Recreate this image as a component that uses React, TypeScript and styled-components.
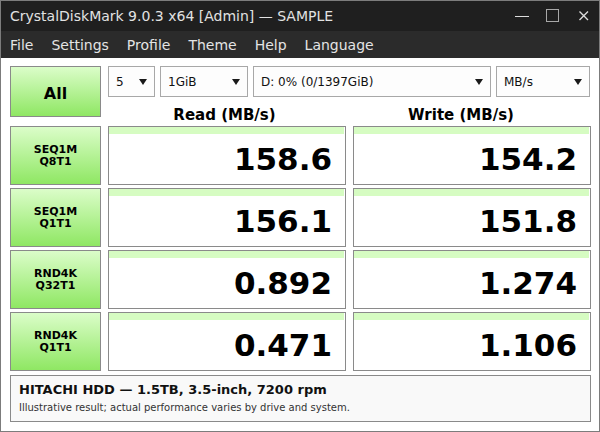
import React from "react";
import styled, { createGlobalStyle } from "styled-components";

const Global = createGlobalStyle`
  html, body { margin: 0; padding: 0; background: #ffffff; }
  * { box-sizing: border-box; }
`;

const FONT = `"DejaVu Sans", Verdana, sans-serif`;

const Window = styled.div`
  width: 600px;
  height: 432px;
  border: 1px solid #7c7c7c;
  background: #ffffff;
  font-family: ${FONT};
  display: flex;
  flex-direction: column;
  overflow: hidden;
`;

const TitleBar = styled.div`
  height: 30px;
  background: #1f1f1f;
  color: #e2e2e2;
  display: flex;
  align-items: center;
  padding-left: 9px;
  font-size: 14px;
`;

const TitleText = styled.div`
  flex: 1;
  white-space: nowrap;
`;

const WinButtons = styled.div`
  display: flex;
  align-items: center;
  height: 100%;
`;

const WinButton = styled.div<{ $w: number }>`
  width: ${(p) => p.$w}px;
  height: 100%;
  display: flex;
  align-items: center;
  justify-content: center;
`;

const MenuBar = styled.div`
  height: 27px;
  background: #2b2b2b;
  color: #e4e4e4;
  display: flex;
  align-items: center;
  font-size: 14px;
`;

const MenuItem = styled.div`
  padding: 0 9px;
  white-space: nowrap;
`;

const Content = styled.div`
  flex: 1;
  padding: 8px 8px 0 9px;
  display: flex;
  flex-direction: column;
`;

const Top = styled.div`
  display: grid;
  grid-template-columns: 91px 238px 238px;
  grid-template-rows: 31px 29px;
  column-gap: 7px;
`;

const GreenButton = styled.div<{ $size: number }>`
  border: 1px solid #8a8a8a;
  background: linear-gradient(#dbfdc9, #8fe763);
  display: flex;
  align-items: center;
  justify-content: center;
  text-align: center;
  font-weight: bold;
  font-size: ${(p) => p.$size}px;
  line-height: ${(p) => (p.$size < 14 ? "12px" : "normal")};
  color: #000;
`;

const AllButton = styled(GreenButton)`
  grid-row: 1 / 3;
  height: 51px;
  padding-top: 3px;
`;

const Combos = styled.div`
  grid-column: 2 / 4;
  display: flex;
  gap: 5px;
`;

const Combo = styled.div<{ $w: number }>`
  width: ${(p) => p.$w}px;
  height: 31px;
  border: 1px solid #a8a8a8;
  background: #fdfdfd;
  display: flex;
  align-items: center;
  padding: 0 7px 0 7px;
  font-size: 12px;
  color: #111;
`;

const ComboLabel = styled.span`
  flex: 1;
  white-space: nowrap;
`;

const Arrow = styled.span`
  width: 0;
  height: 0;
  border-left: 4px solid transparent;
  border-right: 4px solid transparent;
  border-top: 6px solid #1a1a1a;
`;

const Header = styled.div<{ $shift: number }>`
  display: flex;
  align-items: flex-end;
  justify-content: center;
  padding-right: ${(p) => p.$shift}px;
  font-size: 15px;
  font-weight: bold;
  color: #000;
  line-height: 17px;
  margin-bottom: 2px;
`;

const Rows = styled.div`
  display: flex;
  flex-direction: column;
  gap: 3px;
`;

const Row = styled.div`
  display: grid;
  grid-template-columns: 91px 238px 238px;
  column-gap: 7px;
  height: 59px;
`;

const Cell = styled.div`
  border: 1px solid #8a8a8a;
  background: #ffffff;
  display: flex;
  flex-direction: column;
`;

const Bar = styled.div`
  height: 7px;
  background: #d6fcc2;
  margin-right: 1px;
`;

const Value = styled.div`
  flex: 1;
  display: flex;
  align-items: center;
  justify-content: flex-end;
  padding-right: 13px;
  font-size: 31px;
  font-weight: bold;
  color: #000;
`;

const Footer = styled.div`
  margin-top: 4px;
  height: 47px;
  width: 581px;
  border: 1px solid #8a8a8a;
  background: #f9f9f9;
  padding: 6px 8px 0 8px;
  display: flex;
  flex-direction: column;
`;

const FooterTitle = styled.div`
  font-size: 13px;
  font-weight: bold;
  color: #111;
  line-height: 16px;
  white-space: nowrap;
`;

const FooterNote = styled.div`
  font-size: 10px;
  color: #333;
  line-height: 12px;
  margin-top: 4px;
  white-space: nowrap;
`;

const results = [
  { l1: "SEQ1M", l2: "Q8T1", r: "158.6", w: "154.2" },
  { l1: "SEQ1M", l2: "Q1T1", r: "156.1", w: "151.8" },
  { l1: "RND4K", l2: "Q32T1", r: "0.892", w: "1.274" },
  { l1: "RND4K", l2: "Q1T1", r: "0.471", w: "1.106" },
];

const menus = ["File", "Settings", "Profile", "Theme", "Help", "Language"];

export default function App() {
  return (
    <>
      <Global />
      <Window>
        <TitleBar>
          <TitleText>CrystalDiskMark 9.0.3 x64 [Admin] — SAMPLE</TitleText>
          <WinButtons>
            <WinButton $w={30}>
              <svg width="16" height="16" viewBox="0 0 16 16">
                <line x1="1" y1="8.5" x2="15" y2="8.5" stroke="#dcdcdc" strokeWidth="1" />
              </svg>
            </WinButton>
            <WinButton $w={32}>
              <svg width="14" height="14" viewBox="0 0 14 14">
                <rect x="0.5" y="0.5" width="12" height="12" fill="none" stroke="#a8a8a8" strokeWidth="1" />
              </svg>
            </WinButton>
            <WinButton $w={30}>
              <svg width="12" height="12" viewBox="0 0 12 12">
                <path d="M1.5 1.5 L10 10 M10 1.5 L1.5 10" stroke="#dcdcdc" strokeWidth="1.4" />
              </svg>
            </WinButton>
          </WinButtons>
        </TitleBar>
        <MenuBar>
          {menus.map((m) => (
            <MenuItem key={m}>{m}</MenuItem>
          ))}
        </MenuBar>
        <Content>
          <Top>
            <AllButton $size={16}>All</AllButton>
            <Combos>
              <Combo $w={47}>
                <ComboLabel>5</ComboLabel>
                <Arrow />
              </Combo>
              <Combo $w={88}>
                <ComboLabel>1GiB</ComboLabel>
                <Arrow />
              </Combo>
              <Combo $w={238}>
                <ComboLabel>D: 0% (0/1397GiB)</ComboLabel>
                <Arrow />
              </Combo>
              <Combo $w={94}>
                <ComboLabel>MB/s</ComboLabel>
                <Arrow />
              </Combo>
            </Combos>
            <Header $shift={5}>Read (MB/s)</Header>
            <Header $shift={22}>Write (MB/s)</Header>
          </Top>
          <Rows>
            {results.map((r, i) => (
              <Row key={i}>
                <GreenButton $size={11}>
                  {r.l1}
                  <br />
                  {r.l2}
                </GreenButton>
                <Cell>
                  <Bar />
                  <Value>{r.r}</Value>
                </Cell>
                <Cell>
                  <Bar />
                  <Value>{r.w}</Value>
                </Cell>
              </Row>
            ))}
          </Rows>
          <Footer>
            <FooterTitle>HITACHI HDD — 1.5TB, 3.5-inch, 7200 rpm</FooterTitle>
            <FooterNote>Illustrative result; actual performance varies by drive and system.</FooterNote>
          </Footer>
        </Content>
      </Window>
    </>
  );
}
